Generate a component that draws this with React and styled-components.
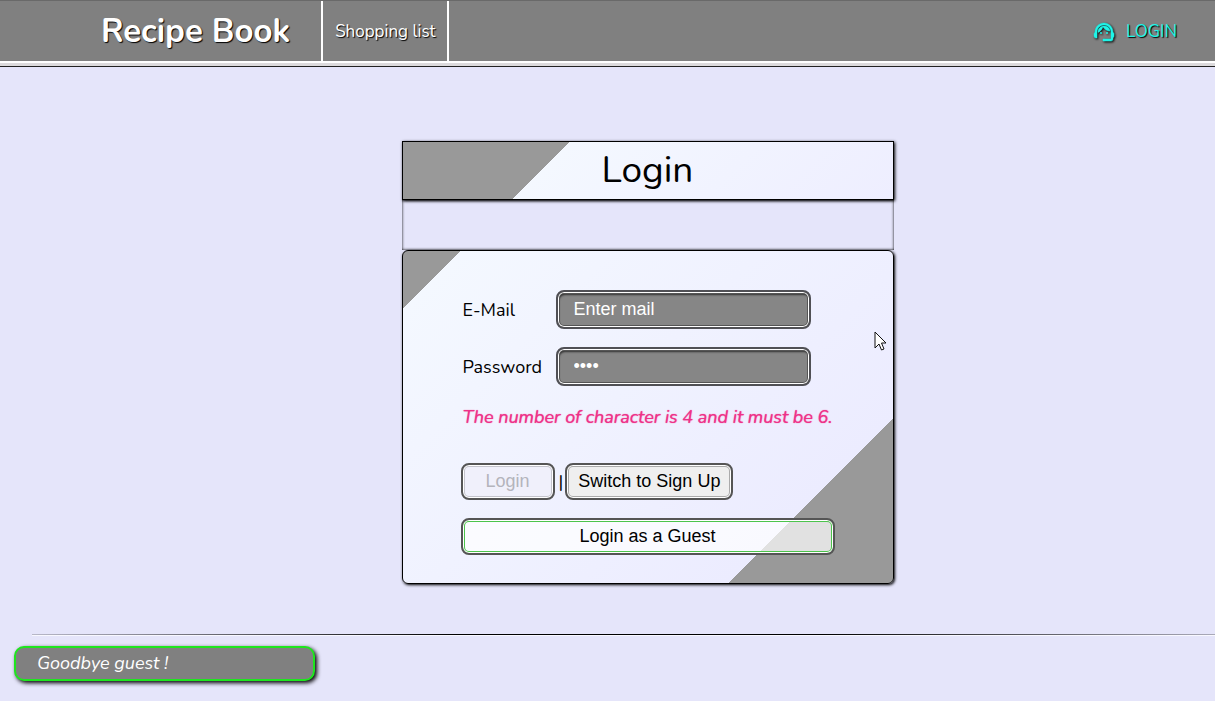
import React from "react";
import styled, { createGlobalStyle } from "styled-components";
import { MdSupportAgent } from "react-icons/md";

const Global = createGlobalStyle`
  *, *::before, *::after { box-sizing: border-box; }
  body {
    margin: 0;
    padding-bottom: 16px;
    background: #e5e5fa;
    color: #000;
    font: 18px/24px Nunito, Lato, sans-serif;
    overflow-x: hidden;
  }
  a { color: inherit; text-decoration: none; }
`;

const Header = styled.header`
  display: flex;
  justify-content: space-between;
  height: 67px;
  padding: 0 38px 0 101px;
  background: #808080;
  border-top: 1px solid #696969;
  border-bottom: 1px solid #222;
  box-shadow: inset 0 -3px #dcdadc, inset 0 -5px #fff;
  color: #fff;
  font-size: 17px;
  text-shadow: 1px 1px 1px #000;
`;

const Nav = styled.nav`
  display: flex;
  height: 61px;
`;

const Brand = styled.a`
  display: flex;
  align-items: center;
  padding-right: 31px;
  font-size: 33px;
  font-weight: 700;
`;

const NavLink = styled.a`
  display: flex;
  align-items: center;
  padding: 0 12px;
  border: solid #fff;
  border-width: 0 2px;
`;

const LoginLink = styled.a`
  display: flex;
  align-items: center;
  gap: 10px;
  height: 61px;
  color: #1ff5e8;
`;

const AgentIcon = styled(MdSupportAgent)`
  width: 24px;
  height: 24px;
  filter: drop-shadow(1px 1px 1px #000);
  path:not([fill="none"]) {
    stroke: currentColor;
    stroke-width: 0.5;
  }
`;

const Main = styled.main`
  display: flex;
  flex-direction: column;
  align-items: center;
  padding: 74px 0 50px 80px;
`;

const Panel = styled.section`
  width: 100%;
  max-width: 492px;
`;

const Title = styled.h1`
  margin: 0;
  padding: 7px 0 8px;
  border: 1px solid #000;
  box-shadow: 1px 1px 3px #000;
  background: linear-gradient(135deg, #999 118px, #f4f8ff 118px, #eeeeff);
  font-size: 37px;
  line-height: 42px;
  font-weight: 400;
  text-align: center;
`;

const Spacer = styled.div`
  height: 50px;
  box-shadow: inset 0 0 3px #000;
`;

const Form = styled.form`
  display: flex;
  flex-direction: column;
  padding: 39px 58px 28px 60px;
  border: 1px solid #000;
  border-radius: 6px;
  box-shadow: 1px 1px 3px #000;
  background: linear-gradient(135deg, #999 7%, #f4f8ff 7%, #ececff 80%, #999 80%);
`;

const Field = styled.div`
  display: flex;
  align-items: center;
  margin-bottom: 18px;
`;

const Label = styled.label`
  width: 93px;
`;

const Input = styled.input`
  width: 255px;
  height: 39px;
  padding: 0 16px;
  border: 2px solid #505055;
  border-radius: 8px;
  background: #868686;
  box-shadow: inset 0 0 0 1px #fff, inset 0 0 0 2px #555, inset 1px 3px 2px #333;
  color: #fff;
  font: 18px "Liberation Sans", sans-serif;
  outline: none;
  &::placeholder { color: #fff; opacity: 1; }
`;

const ErrorText = styled.p`
  margin: 0 0 33px;
  color: #ee3289;
  font-style: italic;
  line-height: 26px;
  text-shadow: 0 0 1px #ee3289;
  white-space: nowrap;
`;

const Actions = styled.div`
  display: flex;
  align-items: center;
  gap: 4px;
  margin-bottom: 18px;
`;

const Button = styled.button`
  height: 37px;
  padding: 0 ${(p) => p.$pad || 11}px;
  margin-left: -2px;
  border: 2px solid #555;
  border-radius: 8px;
  background: ${(p) => p.$fill || "#efefef"};
  box-shadow: inset 0 0 0 1px #fff, inset 0 0 0 2px ${(p) => p.$ring || "#aaa"};
  color: #000;
  font: 18px "Liberation Sans", sans-serif;
  &:disabled { color: #b4b4bc; }
`;

const Rule = styled.hr`
  height: 2px;
  margin: 0 -32px 10px 32px;
  border: 0;
  border-bottom: 1px solid #f8f8ff;
  background: linear-gradient(90deg, #b8b8c8, #000 35%, #000 65%, #b8b8c8);
`;

const Toast = styled.output`
  display: block;
  width: 301px;
  margin-left: 14px;
  padding: 3px 21px 4px;
  border: 2px solid #1ee61e;
  border-radius: 10px;
  background: #808080;
  box-shadow: 2px 2px 4px #000;
  color: #fff;
  font-style: italic;
`;

const Cursor = styled.svg`
  position: absolute;
  left: 874px;
  top: 331px;
  width: 13px;
  height: 20px;
  pointer-events: none;
`;

export default function App() {
  return (
    <>
      <Global />
      <Header>
        <Nav>
          <Brand href="#">Recipe Book</Brand>
          <NavLink href="#shopping">Shopping list</NavLink>
        </Nav>
        <LoginLink href="#login">
          <AgentIcon aria-hidden="true" />
          LOGIN
        </LoginLink>
      </Header>
      <Main>
        <Panel>
          <Title>Login</Title>
          <Spacer />
          <Form>
            <Field>
              <Label htmlFor="mail">E-Mail</Label>
              <Input id="mail" type="email" placeholder="Enter mail" />
            </Field>
            <Field>
              <Label htmlFor="password">Password</Label>
              <Input id="password" type="password" defaultValue="abcd" />
            </Field>
            <ErrorText>The number of character is 4 and it must be 6.</ErrorText>
            <Actions>
              <Button type="submit" disabled $pad={23} $fill="#f0f0fb" $ring="#c4c4cc">Login</Button>
              <span>|</span>
              <Button type="button">Switch to Sign Up</Button>
            </Actions>
            <Button type="button" $fill="rgba(255,255,255,.7)" $ring="#4cc44c">Login as a Guest</Button>
          </Form>
        </Panel>
      </Main>
      <Rule />
      <Toast>Goodbye guest !</Toast>
      <Cursor viewBox="0 0 13 20" aria-hidden="true">
        <path d="M1 1v16l4-4 2.500 6 2.500-1-2.500-6H12z" fill="#fff" stroke="#111" />
      </Cursor>
    </>
  );
}
